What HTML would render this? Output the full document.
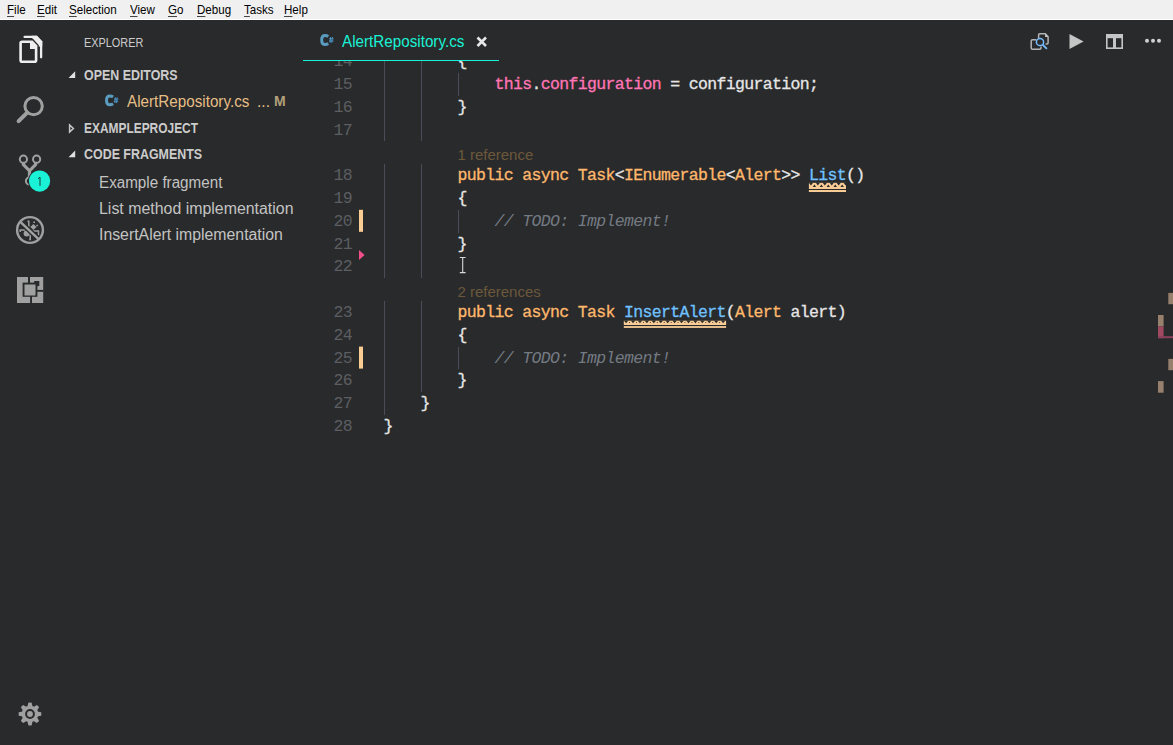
<!DOCTYPE html>
<html><head><meta charset="utf-8">
<style>
*{margin:0;padding:0;box-sizing:border-box}
html,body{width:1173px;height:745px;overflow:hidden;background:#292a2b}
body{position:relative;font-family:"Liberation Sans",sans-serif}
.abs{position:absolute;white-space:pre;transform-origin:0 0}
#menubar{position:absolute;left:0;top:0;width:1173px;height:19px;background:#f0f0f0}
#menuline{position:absolute;left:0;top:19px;width:1173px;height:1px;background:#fff}
.mi{position:absolute;top:3px;color:#000;font-size:12.4px;transform:scaleX(0.935);color:#000;line-height:14px;white-space:pre;transform-origin:0 0}
.mi u{text-decoration:underline;text-decoration-color:#444;text-underline-offset:2px;text-decoration-thickness:1px}
.side{font-size:15.6px;line-height:18px;color:#cccccc}
.hdr{font-size:14px;font-weight:bold;color:#cccccc;line-height:16px}
.code{position:absolute;white-space:pre;font-family:"Liberation Mono",monospace;font-size:16.5px;letter-spacing:-0.65px;line-height:22.8px;height:22.8px;color:#e6e6e6;-webkit-text-stroke:0.3px currentColor}
.ln{position:absolute;font-family:"Liberation Mono",monospace;font-size:16.5px;letter-spacing:-0.65px;line-height:22.8px;color:#5c5e62;text-align:right;width:40px}
.lensrow{position:absolute;white-space:pre;line-height:22.8px;height:22.8px;margin-top:2.5px}
.kw{color:#ffb86c}
.pk{color:#ff75b5}
.bl{color:#6fc1ff}
.cm{color:#747a83;font-style:italic;-webkit-text-stroke:0}
.guide{position:absolute;width:1px;background:#494d5a}
.lens{font-family:"Liberation Sans",sans-serif;font-size:15px;color:#6c583b}
#editor{position:absolute;left:0;top:61px;width:1173px;height:684px;overflow:hidden}
#editor > div{position:absolute;left:0;top:-61px;width:1173px;height:745px}
svg{position:absolute;left:0;top:0;overflow:visible}
</style></head><body>
<div id="menubar"></div><div id="menuline"></div>
<div class="mi" style="left:7px"><u>F</u>ile</div>
<div class="mi" style="left:37px"><u>E</u>dit</div>
<div class="mi" style="left:69px"><u>S</u>election</div>
<div class="mi" style="left:130px"><u>V</u>iew</div>
<div class="mi" style="left:168px"><u>G</u>o</div>
<div class="mi" style="left:197px"><u>D</u>ebug</div>
<div class="mi" style="left:244px"><u>T</u>asks</div>
<div class="mi" style="left:284px"><u>H</u>elp</div>

<div class="abs side" style="left:84px;top:34px;font-size:13.2px;transform:scaleX(0.825)">EXPLORER</div>
<div class="abs hdr" style="left:84px;top:67px;transform:scaleX(0.887)">OPEN EDITORS</div>
<div class="abs side" style="left:127px;top:93px;color:#e6bf86;transform:scaleX(0.976)">AlertRepository.cs</div>
<div class="abs side" style="left:257px;top:92.5px;color:#e6bf86">...</div>
<div class="abs hdr" style="left:274px;top:93px;color:#b3a07c;font-size:14px">M</div>
<div class="abs hdr" style="left:84px;top:120px;transform:scaleX(0.852)">EXAMPLEPROJECT</div>
<div class="abs hdr" style="left:84px;top:146px;transform:scaleX(0.888)">CODE FRAGMENTS</div>
<div class="abs side" style="left:99px;top:174px;color:#c3c3c3;transform:scaleX(0.975)">Example fragment</div>
<div class="abs side" style="left:99px;top:200px;color:#c3c3c3;transform:scaleX(1.02)">List method implementation</div>
<div class="abs side" style="left:99px;top:226px;color:#c3c3c3;transform:scaleX(1.015)">InsertAlert implementation</div>

<div class="abs side" style="left:342px;top:33.3px;color:#19f2d6;transform:scaleX(0.976)">AlertRepository.cs</div>
<div style="position:absolute;left:303px;top:59.6px;width:196px;height:1.5px;background:#19f2d6"></div>

<svg width="1173" height="745" viewBox="0 0 1173 745">
<!-- twisties -->
<path d="M68.5,78 L75.2,78 L75.2,71.3 Z" fill="#e0e0e0"/>
<path d="M69.6,125 L69.6,132 L73.4,128.5 Z" fill="none" stroke="#c8c8c8" stroke-width="1.5" stroke-linejoin="miter"/>
<path d="M68.5,157.2 L75.2,157.2 L75.2,150.5 Z" fill="#e0e0e0"/>

<!-- files icon -->
<g fill="none" stroke="#eeeeee">
<path d="M24.6,36.9 H36.4 L41.1,41.9 V57.3" stroke-linecap="round" stroke-width="2.3"/>
</g>
<path d="M31.5,35.75 H37 L42.25,41.3 V46.5 H38 L32.5,38.6 Z" fill="#eeeeee"/>
<path d="M20.6,60.3 V43.2 Q20.6,41.7 22.1,41.7 H32 L36.1,46 V60.3 Q36.1,61.8 34.6,61.8 H22.1 Q20.6,61.8 20.6,60.3 Z" fill="none" stroke="#292a2b" stroke-width="5.2"/>
<path d="M20.6,60.3 V43.2 Q20.6,41.7 22.1,41.7 H32 L36.1,46 V60.3 Q36.1,61.8 34.6,61.8 H22.1 Q20.6,61.8 20.6,60.3 Z" fill="none" stroke="#eeeeee" stroke-width="2.6"/>
<path d="M30,43 V49 H36.1 V46.5 L32.2,43 Z" fill="#eeeeee"/>

<!-- search -->
<g stroke="#a0a0a0" fill="none">
<circle cx="33.6" cy="106.1" r="8.7" stroke-width="3"/>
<path d="M18.6,121.2 L27.2,112.6" stroke-width="4" stroke-linecap="round"/>
</g>

<!-- git -->
<g stroke="#a0a0a0" fill="none">
<circle cx="23.4" cy="159.2" r="3.6" stroke-width="2"/>
<circle cx="36.6" cy="159.2" r="3.6" stroke-width="2"/>
<path d="M23.4,162.8 V164.5 L29.5,170.8 L35.6,164.5 V162.8 M29.5,170.5 V177.5" stroke-width="3.2"/>
<circle cx="29.5" cy="181" r="3.6" stroke-width="2"/>
</g>
<circle cx="39.6" cy="181.1" r="11.6" fill="#292a2b"/>
<circle cx="39.6" cy="181.1" r="10.6" fill="#19f2d6"/>
<path d="M40,185.8 V177.2 M38.1,178.7 L40,177.3" stroke="#1d3a36" stroke-width="1" fill="none"/>

<!-- debug -->
<g fill="#a0a0a0">
<path d="M33.4,223.9 L36.6,227 L33.4,230.1 L30.3,227 Z"/>
<circle cx="26.6" cy="233.6" r="3"/>
</g>
<g stroke="#a0a0a0" stroke-width="1.5" fill="none">
<path d="M27.5,221.2 H28.8 V227.6"/>
<path d="M33.3,222.3 H35"/>
<path d="M36.4,225.8 L37.8,225.1"/>
<path d="M20.2,232 V230 H25.3"/>
<path d="M32.5,231 H38.5 V235.6"/>
<path d="M30.2,233.4 V239.6 H29.2"/>
</g>
<path d="M20.6,222.2 L38.6,239.2" stroke="#292a2b" stroke-width="5.2"/>
<circle cx="30" cy="230" r="12.9" stroke="#a0a0a0" stroke-width="2.4" fill="none"/>
<path d="M20.6,222.2 L38.6,239.2" stroke="#a0a0a0" stroke-width="2.5"/>

<!-- extensions -->
<rect x="17" y="277" width="26.2" height="26" fill="#a0a0a0"/>
<g fill="#292a2b">
<rect x="22.6" y="282.6" width="14.8" height="14.2"/>
<rect x="28" y="277" width="2" height="6"/>
<rect x="37" y="289.9" width="6.5" height="1.9"/>
<rect x="30.1" y="296" width="1.9" height="7.2"/>
<rect x="34.2" y="281" width="5.1" height="5.1"/>
</g>
<rect x="24.5" y="284.5" width="11" height="11" fill="#a0a0a0"/>

<!-- gear -->
<g fill="#a0a0a0" transform="translate(30,714)">
<path id="tooth" d="M-2.6,-7 L-1.7,-11.2 Q0,-11.6 1.7,-11.2 L2.6,-7 Z"/>
<use href="#tooth" transform="rotate(45)"/>
<use href="#tooth" transform="rotate(90)"/>
<use href="#tooth" transform="rotate(135)"/>
<use href="#tooth" transform="rotate(180)"/>
<use href="#tooth" transform="rotate(225)"/>
<use href="#tooth" transform="rotate(270)"/>
<use href="#tooth" transform="rotate(315)"/>
<circle r="8.3"/>
<circle r="4.9" fill="#292a2b"/>
<circle r="2.9"/>
</g>

<!-- tab C# icon -->
<path d="M328.3,36.6 Q326.8,35.6 325,35.6 Q321.7,35.6 321.7,40 Q321.7,44.5 325,44.5 Q326.8,44.5 328.3,43.5" fill="none" stroke="#5a9bc0" stroke-width="3"/>
<path d="M330.6,37 L330,42.8 M332.4,37 L331.8,42.8 M329.2,38.8 H333.6 M329,41 H333.4" stroke="#4d9fd6" stroke-width="0.9"/>
<!-- sidebar C# icon -->
<path d="M113.1,96.9 Q111.6,95.9 109.8,95.9 Q106.5,95.9 106.5,100.3 Q106.5,104.8 109.8,104.8 Q111.6,104.8 113.1,103.8" fill="none" stroke="#5a9bc0" stroke-width="3"/>
<path d="M115.4,97.3 L114.8,103.1 M117.2,97.3 L116.6,103.1 M114,99.1 H118.4 M113.8,101.3 H118.2" stroke="#4d9fd6" stroke-width="0.9"/>

<!-- close x -->
<path d="M477.5,37.5 L486,46 M486,37.5 L477.5,46" stroke="#e8e8e8" stroke-width="2.6"/>

<!-- editor actions -->
<g fill="none" stroke="#b4b4b4" stroke-width="1.5">
<path d="M1038.6,38 V35 Q1038.6,33.8 1039.8,33.8 H1045.3 L1048.1,36.8 V42.8 Q1048.1,44 1046.9,44 H1045.5"/>
<path d="M1036.3,39.8 H1032.4 Q1031.2,39.8 1031.2,41 V48 Q1031.2,49.2 1032.4,49.2 H1039.8 Q1041,49.2 1041,48 V46.6"/>
</g>
<path d="M1045.2,33.8 V37 H1048.1 Z" fill="#cfcfcf"/>
<g fill="none" stroke="#75beff">
<circle cx="1040" cy="42" r="3.6" stroke-width="1.5"/>
<path d="M1042.6,44.6 L1046.9,48.9" stroke-width="1.9"/>
</g>
<path d="M1069.5,34 L1083.6,41.5 L1069.5,48.9 Z" fill="#c5c5c5"/>
<rect x="1106" y="34" width="17" height="15" fill="#c5c5c5"/>
<g fill="#292a2b">
<rect x="1107.6" y="38.2" width="5.4" height="9.2"/>
<rect x="1116" y="38.2" width="5.4" height="9.2"/>
</g>
<g fill="#d0d0d0">
<circle cx="1147" cy="40.8" r="2"/>
<circle cx="1153" cy="40.8" r="2"/>
<circle cx="1159" cy="40.8" r="2"/>
</g>

<!-- gutter markers -->
<rect x="359" y="209.8" width="4" height="22" fill="#f9cd94"/>
<rect x="359" y="346.6" width="4" height="22" fill="#f9cd94"/>
<path d="M359,250.1 L359,259.9 L364.6,255 Z" fill="#ee4f8b"/>
<!-- I-beam -->
<path d="M459.8,257.5 H465.6 M462.7,257.5 V272.6 M459.8,272.6 H465.6" stroke="#d8d8d8" stroke-width="1.1" fill="none"/>
<!-- squiggles -->
<rect x="808.9" y="182.8" width="37.10" height="6.2" fill="#f9cc96"/><path d="M812.75,187.1 L814.45,184.4 L816.15,187.1 Z" fill="#292a2b"/><path d="M819.68,187.1 L821.38,184.4 L823.08,187.1 Z" fill="#292a2b"/><path d="M826.61,187.1 L828.31,184.4 L830.01,187.1 Z" fill="#292a2b"/><path d="M833.54,187.1 L835.24,184.4 L836.94,187.1 Z" fill="#292a2b"/><path d="M840.47,187.1 L842.17,184.4 L843.87,187.1 Z" fill="#292a2b"/><path d="M808.65,182.6 L810.95,185.6 L813.25,182.6 Z" fill="#292a2b"/><path d="M815.58,182.6 L817.88,185.6 L820.18,182.6 Z" fill="#292a2b"/><path d="M822.51,182.6 L824.81,185.6 L827.11,182.6 Z" fill="#292a2b"/><path d="M829.44,182.6 L831.74,185.6 L834.04,182.6 Z" fill="#292a2b"/><path d="M836.37,182.6 L838.67,185.6 L840.97,182.6 Z" fill="#292a2b"/><path d="M843.30,182.6 L845.60,185.6 L847.90,182.6 Z" fill="#292a2b"/><rect x="808.9" y="190" width="37.10" height="2" fill="#f9cc96"/>
<rect x="623.8" y="320.7" width="102.30" height="4.3" fill="#f9cc96"/><path d="M623.80,320.5 L626.10,323.3 L628.40,320.5 Z" fill="#292a2b"/><path d="M630.73,320.5 L633.03,323.3 L635.33,320.5 Z" fill="#292a2b"/><path d="M637.66,320.5 L639.96,323.3 L642.26,320.5 Z" fill="#292a2b"/><path d="M644.59,320.5 L646.89,323.3 L649.19,320.5 Z" fill="#292a2b"/><path d="M651.52,320.5 L653.82,323.3 L656.12,320.5 Z" fill="#292a2b"/><path d="M658.45,320.5 L660.75,323.3 L663.05,320.5 Z" fill="#292a2b"/><path d="M665.38,320.5 L667.68,323.3 L669.98,320.5 Z" fill="#292a2b"/><path d="M672.31,320.5 L674.61,323.3 L676.91,320.5 Z" fill="#292a2b"/><path d="M679.24,320.5 L681.54,323.3 L683.84,320.5 Z" fill="#292a2b"/><path d="M686.17,320.5 L688.47,323.3 L690.77,320.5 Z" fill="#292a2b"/><path d="M693.10,320.5 L695.40,323.3 L697.70,320.5 Z" fill="#292a2b"/><path d="M700.03,320.5 L702.33,323.3 L704.63,320.5 Z" fill="#292a2b"/><path d="M706.96,320.5 L709.26,323.3 L711.56,320.5 Z" fill="#292a2b"/><path d="M713.89,320.5 L716.19,323.3 L718.49,320.5 Z" fill="#292a2b"/><path d="M720.82,320.5 L723.12,323.3 L725.42,320.5 Z" fill="#292a2b"/><circle cx="629.55" cy="322.5" r="0.55" fill="#292a2b"/><circle cx="636.48" cy="322.5" r="0.55" fill="#292a2b"/><circle cx="643.41" cy="322.5" r="0.55" fill="#292a2b"/><circle cx="650.34" cy="322.5" r="0.55" fill="#292a2b"/><circle cx="657.27" cy="322.5" r="0.55" fill="#292a2b"/><circle cx="664.20" cy="322.5" r="0.55" fill="#292a2b"/><circle cx="671.13" cy="322.5" r="0.55" fill="#292a2b"/><circle cx="678.06" cy="322.5" r="0.55" fill="#292a2b"/><circle cx="684.99" cy="322.5" r="0.55" fill="#292a2b"/><circle cx="691.92" cy="322.5" r="0.55" fill="#292a2b"/><circle cx="698.85" cy="322.5" r="0.55" fill="#292a2b"/><circle cx="705.78" cy="322.5" r="0.55" fill="#292a2b"/><circle cx="712.71" cy="322.5" r="0.55" fill="#292a2b"/><circle cx="719.64" cy="322.5" r="0.55" fill="#292a2b"/><rect x="623.8" y="326.1" width="102.30" height="1.8" fill="#f9cc96"/>
<!-- overview ruler -->
<rect x="1168.3" y="292.9" width="4.7" height="11.3" fill="#97806d"/>
<rect x="1158" y="315" width="5.6" height="11.4" fill="#97806d"/>
<rect x="1158" y="326.4" width="5.6" height="11.8" fill="#a04a62"/>
<rect x="1158" y="336.2" width="15" height="2" fill="#8d405e"/>
<rect x="1168.3" y="358.9" width="4.7" height="11.3" fill="#97806d"/>
<rect x="1158" y="381.1" width="5.6" height="11.6" fill="#97806d"/>
</svg>

<div id="editor"><div>
<div class="ln" style="top:51.20px;left:312px">14</div>
<div class="code" style="top:51.20px;left:457.40px"><span class="br">{</span></div>
<div class="ln" style="top:74.00px;left:312px">15</div>
<div class="code" style="top:74.00px;left:494.40px"><span class="pk">this</span>.<span class="pk">configuration</span> = configuration;</div>
<div class="ln" style="top:96.80px;left:312px">16</div>
<div class="code" style="top:96.80px;left:457.40px">}</div>
<div class="ln" style="top:119.60px;left:312px">17</div>
<div class="lensrow" style="top:141.40px;left:457.40px"><span class="lens">1 reference</span></div>
<div class="ln" style="top:165.20px;left:312px">18</div>
<div class="code" style="top:165.20px;left:457.40px"><span class="kw">public</span> <span class="kw">async</span> <span class="kw">Task</span>&lt;<span class="kw">IEnumerable</span>&lt;<span class="kw">Alert</span>&gt;&gt; <span class="bl">List</span>()</div>
<div class="ln" style="top:188.00px;left:312px">19</div>
<div class="code" style="top:188.00px;left:457.40px">{</div>
<div class="ln" style="top:210.80px;left:312px">20</div>
<div class="code" style="top:210.80px;left:494.40px"><span class="cm">// TODO: Implement!</span></div>
<div class="ln" style="top:233.60px;left:312px">21</div>
<div class="code" style="top:233.60px;left:457.40px">}</div>
<div class="ln" style="top:256.40px;left:312px">22</div>
<div class="lensrow" style="top:278.20px;left:457.40px"><span class="lens">2 references</span></div>
<div class="ln" style="top:302.00px;left:312px">23</div>
<div class="code" style="top:302.00px;left:457.40px"><span class="kw">public</span> <span class="kw">async</span> <span class="kw">Task</span> <span class="bl">InsertAlert</span>(<span class="kw">Alert</span> alert)</div>
<div class="ln" style="top:324.80px;left:312px">24</div>
<div class="code" style="top:324.80px;left:457.40px">{</div>
<div class="ln" style="top:347.60px;left:312px">25</div>
<div class="code" style="top:347.60px;left:494.40px"><span class="cm">// TODO: Implement!</span></div>
<div class="ln" style="top:370.40px;left:312px">26</div>
<div class="code" style="top:370.40px;left:457.40px">}</div>
<div class="ln" style="top:393.20px;left:312px">27</div>
<div class="code" style="top:393.20px;left:420.40px">}</div>
<div class="ln" style="top:416.00px;left:312px">28</div>
<div class="code" style="top:416.00px;left:383.40px">}</div>
<div class="guide" style="left:384px;top:61.00px;height:80.40px"></div>
<div class="guide" style="left:384px;top:164.20px;height:114.00px"></div>
<div class="guide" style="left:384px;top:301.00px;height:114.00px"></div>
<div class="guide" style="left:421px;top:61.00px;height:80.40px"></div>
<div class="guide" style="left:421px;top:164.20px;height:114.00px"></div>
<div class="guide" style="left:421px;top:301.00px;height:91.20px"></div>
<div class="guide" style="left:458px;top:73.00px;height:22.80px"></div>
<div class="guide" style="left:458px;top:209.80px;height:22.80px"></div>
<div class="guide" style="left:458px;top:346.60px;height:22.80px"></div>
</div></div>
</body></html>
